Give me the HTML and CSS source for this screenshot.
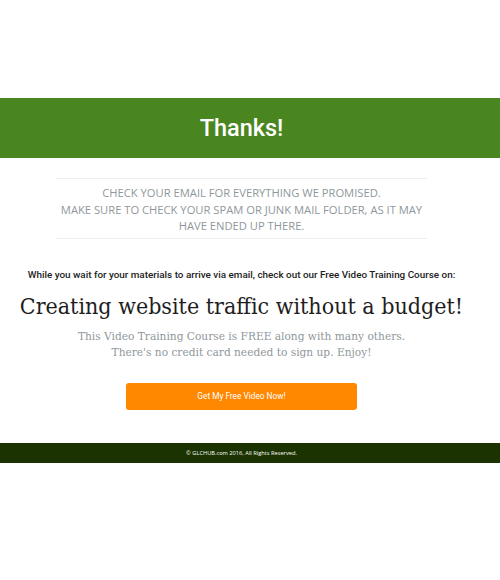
FILE: index.html
```html
<!DOCTYPE html>
<html>
<head>
<meta charset="utf-8">
<link rel="stylesheet" href="styles.css">
</head>
<body>
<div class="top-space"></div>
<header class="banner">
  <div class="wrap"><h1 class="banner-title">Thanks!</h1></div>
</header>
<main class="wrap main">
  <section class="notice">
    <p>CHECK YOUR EMAIL FOR EVERYTHING WE PROMISED.<br>MAKE SURE TO CHECK YOUR SPAM OR JUNK MAIL FOLDER, AS IT MAY HAVE ENDED UP THERE.</p>
  </section>
  <p class="lead">While you wait for your materials to arrive via email, check out our Free Video Training Course on:</p>
  <h2 class="headline">Creating website traffic without a budget!</h2>
  <p class="sub">This Video Training Course is FREE along with many others.<br>There's no credit card needed to sign up. Enjoy!</p>
  <a class="cta" href="#">Get My Free Video Now!</a>
</main>
<footer class="footer">
  <div class="wrap"><p class="footer-text">© GLCHUB.com 2016, All Rights Reserved.</p></div>
</footer>
</body>
</html>
```

FILE: styles.css
```css
html, body { margin: 0; padding: 0; background: #fff; }
body { font-family: "Open Sans", sans-serif; }
.top-space { height: 98px; }
.wrap { width: 483px; }
.banner { background: #4a861f; height: 60px; }
.banner .wrap { height: 60px; display: flex; align-items: center; justify-content: center; }
.banner-title { margin: 2px 0 0; font-family: Roboto, sans-serif; font-weight: 500; font-size: 23.5px; color: #fff; line-height: 1; }
.main { display: flex; flex-direction: column; align-items: center; padding-top: 20px; }
.notice { width: 371px; border-top: 1px solid #eeeeee; border-bottom: 1px solid #eeeeee; padding: 6px 0 3px; }
.notice p { margin: 0; font-family: "Open Sans", sans-serif; font-size: 11.2px; line-height: 16.5px; color: #8f979c; text-align: center; }
.lead { margin: 30px 0 0; font-family: Roboto, sans-serif; font-weight: 500; font-size: 9.9px; color: #222; text-align: center; }
.headline { margin: 13px 0 0; font-family: "DejaVu Serif", serif; font-stretch: condensed; font-weight: normal; font-size: 23px; color: #1e1e1e; text-align: center; white-space: nowrap; }
.sub { margin: 9px 0 0; font-family: "DejaVu Serif", serif; font-stretch: condensed; font-size: 11.8px; line-height: 16px; color: #8f979c; text-align: center; }
.cta { margin-top: 23px; display: flex; align-items: center; justify-content: center; width: 231px; height: 27px; background: #ff8800; border-radius: 3px; color: #fff; text-decoration: none; font-family: Roboto, sans-serif; font-size: 8.3px; }
.footer { margin-top: 33px; background: #1a3300; height: 20px; }
.footer .wrap { height: 20px; display: flex; align-items: center; justify-content: center; }
.footer-text { margin: 0; font-family: "Open Sans", sans-serif; font-size: 5.7px; color: #fff; }
```
